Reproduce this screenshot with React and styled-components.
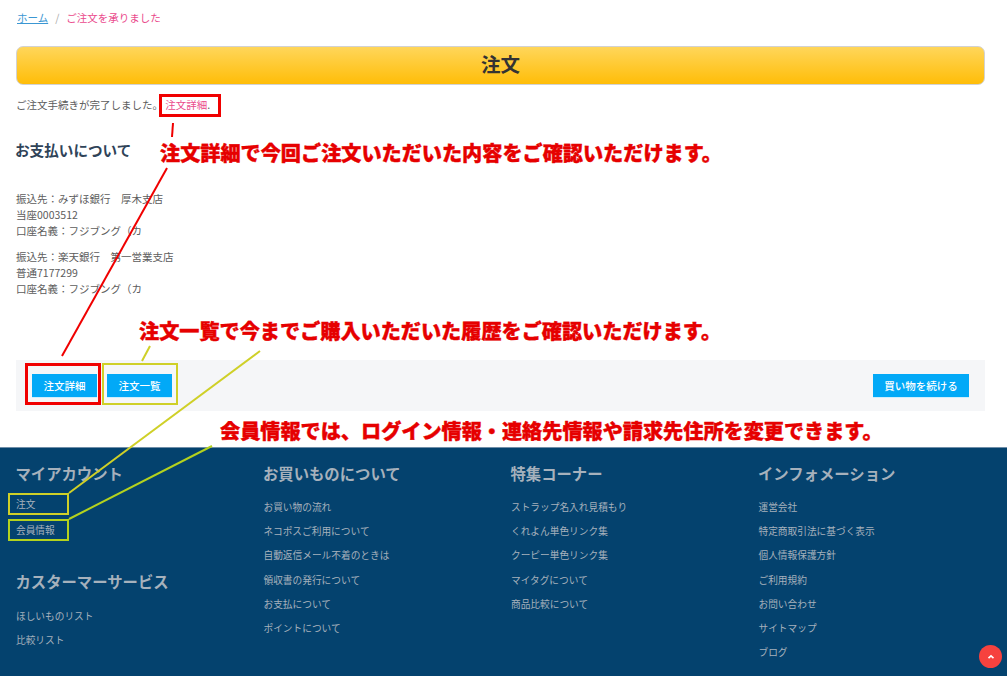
import React from 'react';
import styled, { createGlobalStyle } from 'styled-components';

const Global = createGlobalStyle`
  html, body { margin: 0; padding: 0; background: #fff; }
  body { font-family: "Noto Sans CJK JP", "Noto Sans", sans-serif; font-size: 10.5px; color: #5c5c5c; }
  * { box-sizing: border-box; }
`;

const Page = styled.div`
  position: relative;
  width: 1007px;
  height: 676px;
  overflow: hidden;
`;
const Main = styled.main`
  padding: 10px 22px 0 16px;
`;
const Crumbs = styled.nav`
  display: flex;
  gap: 7px;
  padding-left: 1px;
  line-height: 16px;
  color: #aaa;
`;
const HomeLink = styled.a`
  color: #3b97d3;
  text-decoration: underline;
`;
const Current = styled.span`
  color: #ea4a8c;
`;
const TitleBar = styled.h1`
  margin: 20px 0 0;
  height: 39px;
  border: 1px solid #d2d2d2;
  border-radius: 7px;
  background: linear-gradient(#ffd65a, #ffbd08);
  color: #333;
  font-size: 19.5px;
  font-weight: 700;
  line-height: 34px;
  text-align: center;
`;
const Message = styled.p`
  margin: 12px 0 0;
  line-height: 16px;
`;
const PinkLink = styled.a`
  color: #ea4a8c;
`;
const Heading = styled.h2`
  margin: 27px 0 0 -1px;
  font-size: 14.6px;
  font-weight: 700;
  line-height: 20px;
  color: #2f4358;
`;
const BankBlock = styled.p`
  margin: ${(p) => (p.$first ? '31px' : '10px')} 0 0;
  line-height: 16px;
`;
const ActionBar = styled.div`
  display: flex;
  align-items: center;
  gap: 10px;
  height: 51px;
  margin-top: 63px;
  padding: 0 16px;
  background: #f5f6f8;
`;
const Action = styled.a`
  display: block;
  height: 24px;
  width: ${(p) => p.$w}px;
  margin-left: ${(p) => (p.$push ? 'auto' : '0')};
  background: #02a9f7;
  border-bottom: 1px solid #cdeefd;
  color: #fff;
  font-weight: 500;
  line-height: 23px;
  text-align: center;
`;
const Footer = styled.footer`
  display: grid;
  grid-template-columns: repeat(4, 247.5px);
  height: 229px;
  margin-top: 36px;
  padding: 15px 0 0 16px;
  background: #04426e;
  border-top: 1px solid #6f8ea8;
  color: #a6b1bc;
  font-size: 9.7px;
`;
const FootTitle = styled.h3`
  margin: ${(p) => p.$top || 0}px 0 0 -0.5px;
  font-size: 15.35px;
  font-weight: 700;
  line-height: 20px;
  color: #a6b1bc;
`;
const FootList = styled.ul`
  margin: ${(p) => p.$top ?? 12}px 0 0;
  padding: 0;
  list-style: none;
`;
const FootItem = styled.li`
  height: ${(p) => p.$h || 24.2}px;
  line-height: ${(p) => p.$h || 24.2}px;
`;
const Note = styled.div`
  position: absolute;
  left: ${(p) => p.$x}px;
  top: ${(p) => p.$y}px;
  font-size: 20.15px;
  font-weight: 900;
  line-height: 28px;
  white-space: nowrap;
  color: #e60000;
  -webkit-text-stroke: 0.4px #e60000;
`;
const Marker = styled.div`
  position: absolute;
  left: ${(p) => p.$x}px;
  top: ${(p) => p.$y}px;
  width: ${(p) => p.$w}px;
  height: ${(p) => p.$h}px;
  border: ${(p) => p.$b}px solid ${(p) => p.$c};
`;
const Lines = styled.svg`
  position: absolute;
  left: 0;
  top: 0;
  pointer-events: none;
`;
const ToTop = styled.a`
  position: absolute;
  left: 979px;
  top: 645px;
  display: flex;
  align-items: center;
  justify-content: center;
  width: 23px;
  height: 23px;
  border-radius: 50%;
  background: #f6423e;
`;

const colA = ['お買い物の流れ', 'ネコポスご利用について', '自動返信メール不着のときは', '領収書の発行について', 'お支払について', 'ポイントについて'];
const colB = ['ストラップ名入れ見積もり', 'くれよん単色リンク集', 'クーピー単色リンク集', 'マイタグについて', '商品比較について'];
const colC = ['運営会社', '特定商取引法に基づく表示', '個人情報保護方針', 'ご利用規約', 'お問い合わせ', 'サイトマップ', 'ブログ'];

const RED = '#f00000';
const YEL = '#cfd028';
const GRN = '#b4d21e';

export default function App() {
  return (
    <Page>
      <Global />
      <Main>
        <Crumbs>
          <HomeLink>ホーム</HomeLink>
          <span>/</span>
          <Current>ご注文を承りました</Current>
        </Crumbs>
        <TitleBar>注文</TitleBar>
        <Message>
          ご注文手続きが完了しました。 <PinkLink>注文詳細</PinkLink>.
        </Message>
        <Heading>お支払いについて</Heading>
        <BankBlock $first>
          振込先：みずほ銀行　厚木支店<br />当座0003512<br />口座名義：フジブング（カ
        </BankBlock>
        <BankBlock>
          振込先：楽天銀行　第一営業支店<br />普通7177299<br />口座名義：フジブング（カ
        </BankBlock>
        <ActionBar>
          <Action $w={65}>注文詳細</Action>
          <Action $w={65}>注文一覧</Action>
          <Action $w={96} $push>買い物を続ける</Action>
        </ActionBar>
      </Main>
      <Footer>
        <div>
          <FootTitle>マイアカウント</FootTitle>
          <FootList $top={8}>
            <FootItem $h={26}>注文</FootItem>
            <FootItem $h={26}>会員情報</FootItem>
          </FootList>
          <FootTitle $top={28}>カスターマーサービス</FootTitle>
          <FootList $top={13}>
            <FootItem>ほしいものリスト</FootItem>
            <FootItem>比較リスト</FootItem>
          </FootList>
        </div>
        <div>
          <FootTitle>お買いものについて</FootTitle>
          <FootList>{colA.map((t) => <FootItem key={t}>{t}</FootItem>)}</FootList>
        </div>
        <div>
          <FootTitle>特集コーナー</FootTitle>
          <FootList>{colB.map((t) => <FootItem key={t}>{t}</FootItem>)}</FootList>
        </div>
        <div>
          <FootTitle>インフォメーション</FootTitle>
          <FootList>{colC.map((t) => <FootItem key={t}>{t}</FootItem>)}</FootList>
        </div>
      </Footer>

      <Lines width="1007" height="676" viewBox="0 0 1007 676">
        <line x1="173" y1="123" x2="172" y2="137" stroke={RED} strokeWidth="2" />
        <line x1="167" y1="168" x2="62" y2="356" stroke={RED} strokeWidth="2" />
        <line x1="150" y1="346" x2="142" y2="361" stroke={YEL} strokeWidth="2" />
        <line x1="260" y1="351" x2="69" y2="493" stroke={YEL} strokeWidth="2" />
        <line x1="212" y1="446" x2="69" y2="519" stroke={GRN} strokeWidth="2" />
      </Lines>
      <Marker $x={159} $y={94} $w={62} $h={23} $b={3} $c={RED} />
      <Marker $x={25} $y={363} $w={76} $h={42} $b={3} $c={RED} />
      <Marker $x={102} $y={363} $w={76} $h={42} $b={2} $c={YEL} />
      <Marker $x={8} $y={493} $w={61} $h={22} $b={2} $c={YEL} />
      <Marker $x={8} $y={519} $w={61} $h={22} $b={2} $c={GRN} />
      <Note $x={160} $y={139}>注文詳細で今回ご注文いただいた内容をご確認いただけます。</Note>
      <Note $x={139} $y={317}>注文一覧で今までご購入いただいた履歴をご確認いただけます。</Note>
      <Note $x={220} $y={417}>会員情報では、ログイン情報・連絡先情報や請求先住所を変更できます。</Note>
      <ToTop>
        <svg width="10" height="10" viewBox="0 0 10 10" fill="none" stroke="#fff" strokeWidth="1.6">
          <path d="M2.5 6.2 5 3.8l2.5 2.4" />
        </svg>
      </ToTop>
    </Page>
  );
}
